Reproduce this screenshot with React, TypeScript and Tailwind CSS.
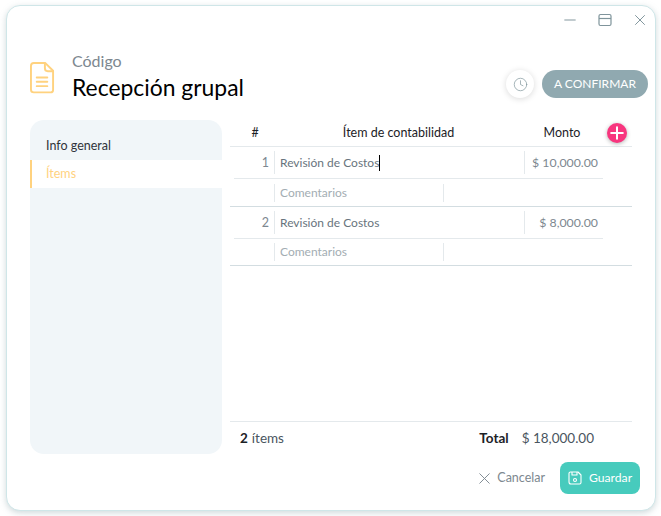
import { Clock, Minus, Plus, X } from "lucide-react";

const font = { fontFamily: 'Lato, sans-serif' };

const Row = ({ num, amount, caret, last }: { num: string; amount: string; caret?: boolean; last?: boolean }) => (
  <div className="border-b border-[#d3dde1]">
    <div className="flex h-[32px] w-[369px] items-center border-b border-[#e4e9ec] ml-[4px]">
      <div className="w-[41px] h-[23px] flex items-center justify-end pt-px pr-[5px] border-r border-[#e4e9ec] text-[12.5px] text-[#7d8890]">
        {num}
      </div>
      <div className="w-[249px] h-[23px] flex items-center pt-px pl-[5px] text-[12px] text-[#68747d]">
        Revisión de Costos
        {caret && <span className="inline-block w-px h-[16px] bg-black" />}
      </div>
      <div className="flex-1 h-[23px] flex items-center justify-end pt-px pr-[5px] border-l border-[#e4e9ec] text-[12.300px] text-[#7d8890]">
        {amount}
      </div>
    </div>
    <div className={last ? "flex h-[26px] w-[369px] items-center ml-[4px]" : "flex h-[27px] w-[369px] items-center ml-[4px]"}>
      <div className="w-[41px] h-[18px] border-r border-[#e4e9ec]" />
      <div className="w-[169px] h-[18px] flex items-center pl-[5px] border-r border-[#e4e9ec] text-[12px] text-[#a3adb3]">
        Comentarios
      </div>
    </div>
  </div>
);

export default function App() {
  return (
    <div className="w-[661px] h-[516px] bg-white pt-[5px] pl-[6px]" style={font}>
      <div className="w-[650px] h-[506px] flex flex-col rounded-[14px] bg-white border border-[#cfe6e8] shadow-[0_2px_6px_rgba(120,150,155,0.35)]">
        <div className="flex h-[27px] shrink-0 items-center justify-end gap-[19px] pr-[6px] pt-[1px] text-[#7f949b]">
          <Minus size={18} strokeWidth={1.3} />
          <svg width="14" height="14" viewBox="0 0 14 14" fill="none" stroke="currentColor" strokeWidth="1.2">
            <rect x="1" y="1.5" width="12" height="11" rx="1.5" />
            <path d="M1 5.5h12" />
          </svg>
          <X size={18} strokeWidth={1.3} />
        </div>

        <div className="flex h-[68px] shrink-0 items-start pl-[23px] pr-[7px] pt-[18px]">
          <svg className="mt-[10px]" width="25" height="33" viewBox="0 0 26 34" fill="none" stroke="#ffd27f" strokeWidth="2" strokeLinejoin="round" strokeLinecap="round">
            <path d="M4 2h12l8 8v20a2.500 2.500 0 0 1-2.500 2.500h-17.500a3 3 0 0 1-3-3v-24.500a3 3 0 0 1 3-3z" />
            <path d="M15.500 2.500v5a3 3 0 0 0 3 3h5" />
            <path d="M7 17h11M7 21.500h11M7 26h11" />
          </svg>
          <div className="ml-[17px]">
            <div className="text-[16px] leading-[20px] text-[#7d8890]">Código</div>
            <div className="text-[22.900px] leading-[33px] text-black">Recepción grupal</div>
          </div>
          <div className="ml-auto flex items-center gap-[8px] mt-[19px]">
            <div className="w-[28px] h-[28px] rounded-full bg-white shadow-[0_1px_6px_rgba(0,0,0,0.15)] flex items-center justify-center text-[#7f949b]">
              <Clock size={15} strokeWidth={1.1} />
            </div>
            <div className="w-[106px] h-[28px] rounded-full bg-[#90a9b0] flex items-center justify-center text-[12px] text-white">
              A CONFIRMAR
            </div>
          </div>
        </div>

        <div className="flex flex-1 min-h-0 pl-[23px] pt-[19px]">
          <div className="w-[192px] h-[334px] rounded-[14px] bg-[#f1f6f9] pt-[12px] text-[12.500px]">
            <div className="h-[28px] flex items-center pt-px pl-[16px] text-[#30343a]">Info general</div>
            <div className="h-[28px] flex items-center pt-px pl-[14px] bg-white border-l-2 border-[#ffd27f] text-[#ffd27f]">Ítems</div>
          </div>

          <div className="ml-[8px] w-[402px] h-[334px] flex flex-col">
            <div className="relative flex h-[27px] shrink-0 items-center border-b border-[#e4e9ec] text-[12.500px] text-[#1c2126]">
              <div className="w-[44px] text-center pl-[6px]">#</div>
              <div className="w-[249px] text-center">Ítem de contabilidad</div>
              <div className="w-[78px] text-center">Monto</div>
              <div className="absolute left-[377px] top-[3px] w-[20px] h-[20px] rounded-full bg-[#f8357e] shadow-[0_1px_4px_rgba(0,0,0,0.3)] flex items-center justify-center text-white">
                <Plus size={20} strokeWidth={2.4} className="shrink-0" />
              </div>
            </div>
            <Row num="1" amount="$ 10,000.00" caret />
            <Row num="2" amount="$ 8,000.00" last />
            <div className="mt-auto h-[33px] flex items-center border-t border-[#e4e9ec] text-[13.500px] pl-[10px] pr-[38px] text-[#4a5560]">
              <span className="font-bold text-[#1c2126] mr-[4px]">2</span> ítems
              <span className="ml-auto font-bold text-[#1c2126] mr-[13px]">Total</span>
              <span>$ 18,000.00</span>
            </div>
          </div>
        </div>

        <div className="flex h-[48px] shrink-0 items-start justify-end pr-[15px] text-[12.500px]">
          <div className="h-[32px] flex items-center text-[#7d8890] mr-[15px]">
            <X size={19} strokeWidth={1.2} className="mr-[3px]" />
            Cancelar
          </div>
          <div className="w-[80px] h-[32px] rounded-[8px] bg-[#47cbbd] flex items-center justify-center gap-[7px] text-[12.200px] text-white">
            <svg width="14" height="14" viewBox="0 0 14 14" fill="none" stroke="currentColor" strokeWidth="1.1" strokeLinejoin="round">
              <path d="M3 1h7l3 3v7.500a1.500 1.500 0 0 1-1.500 1.500h-8.500a2 2 0 0 1-2-2v-8.500a1.500 1.500 0 0 1 1.500-1.500z" />
              <path d="M4 1v3h5v-3" />
              <circle cx="7" cy="9" r="1.500" />
            </svg>
            Guardar
          </div>
        </div>
      </div>
    </div>
  );
}
